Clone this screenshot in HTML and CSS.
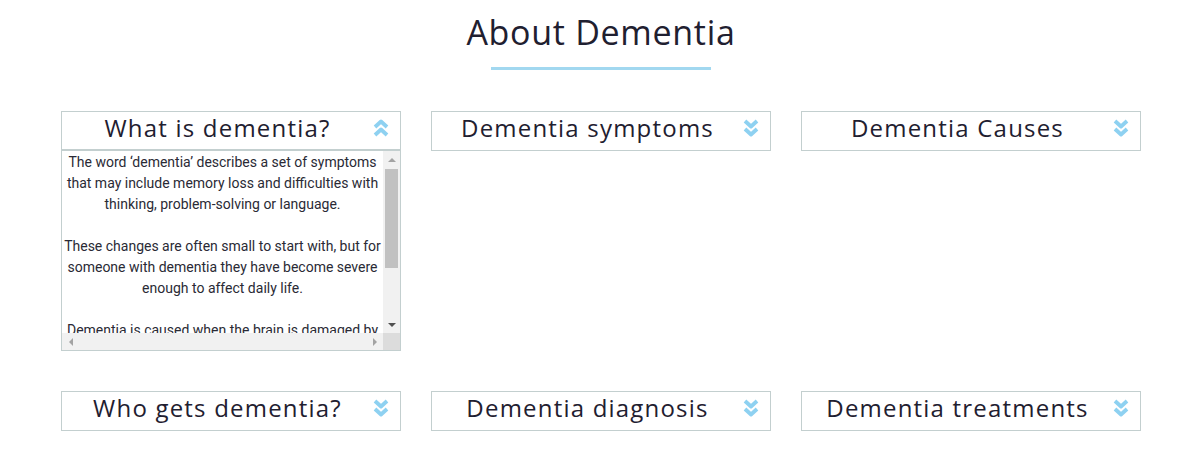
FILE: index.html
```html
<!DOCTYPE html>
<html>
<head>
<meta charset="utf-8">
<link rel="stylesheet" href="styles.css">
</head>
<body>
<div class="page">
  <h1 class="title">About Dementia</h1>
  <div class="underline"></div>
  <div class="grid">
    <div class="item">
      <div class="head open"><span class="label">What is dementia?</span>
        <svg class="chev" viewBox="0 0 16 20"><polyline points="2,9 8,3.5 14,9"/><polyline points="2,17 8,11.5 14,17"/></svg>
      </div>
      <div class="body">
        <div class="viewport">
          <p>The word ‘dementia’ describes a set of symptoms that may include memory loss and difficulties with thinking, problem-solving or language.</p>
          <p>These changes are often small to start with, but for someone with dementia they have become severe enough to affect daily life.</p>
          <p>Dementia is caused when the brain is damaged by diseases, such as Alzheimer's disease or a series of strokes.</p>
        </div>
        <div class="vbar">
          <div class="btn"><span class="tri up"></span></div>
          <div class="track"><div class="thumb"></div></div>
          <div class="btn"><span class="tri down"></span></div>
        </div>
        <div class="hbar">
          <div class="btn"><span class="tri left"></span></div>
          <div class="btn"><span class="tri right"></span></div>
        </div>
        <div class="corner"></div>
      </div>
    </div>
    <div class="item">
      <div class="head"><span class="label">Dementia symptoms</span>
        <svg class="chev" viewBox="0 0 16 20"><polyline points="2,3 8,8.5 14,3"/><polyline points="2,11 8,16.5 14,11"/></svg>
      </div>
    </div>
    <div class="item">
      <div class="head"><span class="label">Dementia Causes</span>
        <svg class="chev" viewBox="0 0 16 20"><polyline points="2,3 8,8.5 14,3"/><polyline points="2,11 8,16.5 14,11"/></svg>
      </div>
    </div>
    <div class="item">
      <div class="head"><span class="label">Who gets dementia?</span>
        <svg class="chev" viewBox="0 0 16 20"><polyline points="2,3 8,8.5 14,3"/><polyline points="2,11 8,16.5 14,11"/></svg>
      </div>
    </div>
    <div class="item">
      <div class="head"><span class="label">Dementia diagnosis</span>
        <svg class="chev" viewBox="0 0 16 20"><polyline points="2,3 8,8.5 14,3"/><polyline points="2,11 8,16.5 14,11"/></svg>
      </div>
    </div>
    <div class="item">
      <div class="head"><span class="label">Dementia treatments</span>
        <svg class="chev" viewBox="0 0 16 20"><polyline points="2,3 8,8.5 14,3"/><polyline points="2,11 8,16.5 14,11"/></svg>
      </div>
    </div>
  </div>
</div>
</body>
</html>
```

FILE: styles.css
```css
html, body {
  margin: 0;
  padding: 0;
  background: #ffffff;
}
.page {
  width: 1080px;
  margin-left: 61px;
  padding-top: 12px;
  font-family: "Open Sans", "DejaVu Sans", sans-serif;
  color: #1f2030;
}
.title {
  margin: 0;
  text-align: center;
  font-weight: 400;
  font-size: 34px;
  line-height: 40px;
  letter-spacing: 0.7px;
}
.underline {
  width: 220px;
  height: 3px;
  background: #a2d8f0;
  margin: 15px auto 0;
}
.grid {
  margin-top: 41px;
  display: grid;
  grid-template-columns: 340px 340px 340px;
  column-gap: 30px;
  row-gap: 40px;
  align-items: start;
}
.item {
  display: flex;
  flex-direction: column;
}
.head {
  height: 31px;
  padding-bottom: 7px;
  border: 1px solid #c3cfcf;
  display: flex;
  align-items: center;
  padding-right: 11px;
}
.head.open {
  border-bottom: 2px solid #c3cfcf;
  padding-bottom: 6px;
}
.label {
  flex: 1;
  text-align: center;
  font-size: 24px;
  letter-spacing: 1.2px;
  line-height: 31px;
}
.chev {
  width: 16px;
  height: 20px;
  fill: none;
  stroke: #8ed1f1;
  stroke-width: 3.8;
  stroke-linejoin: round;
}
.body {
  height: 199px;
  border: 1px solid #c3cfcf;
  border-top: none;
  display: grid;
  grid-template-columns: 321px 17px;
  grid-template-rows: 182px 17px;
}
.viewport {
  overflow: hidden;
  font-family: Roboto, "Liberation Sans", sans-serif;
  font-size: 14px;
  line-height: 21px;
  color: #2a2a35;
  text-align: center;
  padding: 1px 1px 0;
}
.viewport p {
  margin: 0 0 21px;
}
.vbar {
  background: #f1f1f1;
  display: flex;
  flex-direction: column;
}
.vbar .btn {
  height: 17px;
  display: flex;
  align-items: center;
  justify-content: center;
}
.track {
  flex: 1;
  padding: 1px 2px;
}
.thumb {
  height: 99px;
  background: #c1c1c1;
}
.hbar {
  background: #f1f1f1;
  display: flex;
  justify-content: space-between;
}
.hbar .btn {
  width: 17px;
  display: flex;
  align-items: center;
  justify-content: center;
}
.corner {
  background: #dcdcdc;
}
.tri {
  width: 0;
  height: 0;
  border-style: solid;
}
.tri.up {
  border-width: 0 4px 4px 4px;
  border-color: transparent transparent #a3a3a3 transparent;
}
.tri.down {
  border-width: 4px 4px 0 4px;
  border-color: #505050 transparent transparent transparent;
}
.tri.left {
  border-width: 4px 4px 4px 0;
  border-color: transparent #a3a3a3 transparent transparent;
}
.tri.right {
  border-width: 4px 0 4px 4px;
  border-color: transparent transparent transparent #a3a3a3;
}
```
